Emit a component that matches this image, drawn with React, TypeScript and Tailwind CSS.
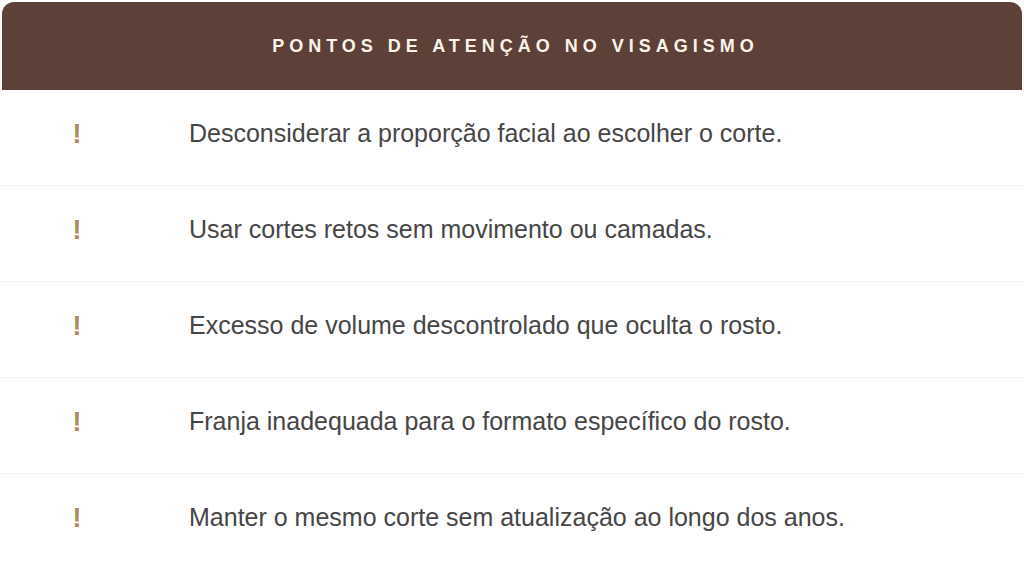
export default function App() {
  const items = [
    "Desconsiderar a proporção facial ao escolher o corte.",
    "Usar cortes retos sem movimento ou camadas.",
    "Excesso de volume descontrolado que oculta o rosto.",
    "Franja inadequada para o formato específico do rosto.",
    "Manter o mesmo corte sem atualização ao longo dos anos.",
  ];
  return (
    <div className="w-[1024px] h-[568px] bg-white overflow-hidden" style={{ fontFamily: '"Liberation Sans", Arial, sans-serif' }}>
      <div className="mx-[2px] mt-[2px] rounded-t-[12px] overflow-hidden">
        <div className="h-[88px] bg-[#5d4037] flex items-center justify-center">
          <span className="text-[18px] font-bold tracking-[5px] text-[#fbf3ea] pl-[7px]">PONTOS DE ATENÇÃO NO VISAGISMO</span>
        </div>
        {items.map((t, i) => (
          <div key={i} className={`h-[96px] flex items-center ${i < items.length - 1 ? "border-b border-[#f5efe8]" : ""}`}>
            <div className="w-[150px] flex justify-center pb-[8px]">
              <span className="text-[28px] leading-none font-bold text-[#b08d5e]">!</span>
            </div>
            <div className="pl-[37px] pb-[8px] text-[25px] text-[#464646]">{t}</div>
          </div>
        ))}
      </div>
    </div>
  );
}
